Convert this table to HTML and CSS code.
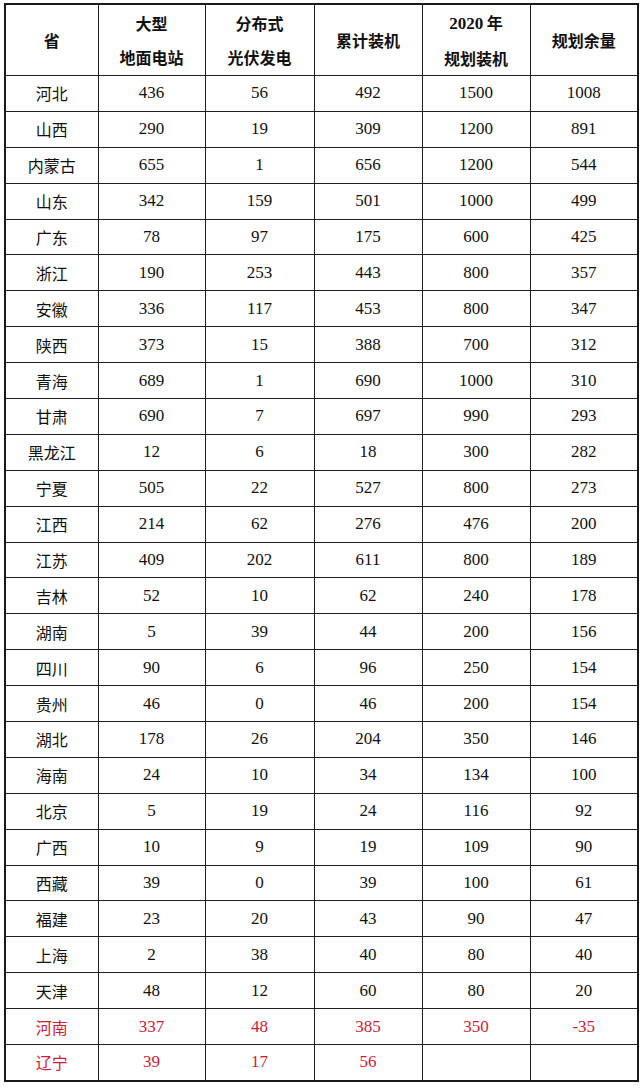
FILE: index.html
```html
<!DOCTYPE html>
<html lang="zh">
<head>
<meta charset="utf-8">
<link rel="stylesheet" href="styles.css">
</head>
<body>
<table class="grid">
<colgroup>
<col class="c1"><col class="c2"><col class="c3"><col class="c4"><col class="c5"><col class="c6">
</colgroup>
<thead>
<tr><th>省</th><th>大型<br>地面电站</th><th>分布式<br>光伏发电</th><th>累计装机</th><th><span class="num">2020</span> 年<br>规划装机</th><th>规划余量</th></tr>
</thead>
<tbody>
<tr><td class="prov">河北</td><td>436</td><td>56</td><td>492</td><td>1500</td><td>1008</td></tr>
<tr><td class="prov">山西</td><td>290</td><td>19</td><td>309</td><td>1200</td><td>891</td></tr>
<tr><td class="prov">内蒙古</td><td>655</td><td>1</td><td>656</td><td>1200</td><td>544</td></tr>
<tr><td class="prov">山东</td><td>342</td><td>159</td><td>501</td><td>1000</td><td>499</td></tr>
<tr><td class="prov">广东</td><td>78</td><td>97</td><td>175</td><td>600</td><td>425</td></tr>
<tr><td class="prov">浙江</td><td>190</td><td>253</td><td>443</td><td>800</td><td>357</td></tr>
<tr><td class="prov">安徽</td><td>336</td><td>117</td><td>453</td><td>800</td><td>347</td></tr>
<tr><td class="prov">陕西</td><td>373</td><td>15</td><td>388</td><td>700</td><td>312</td></tr>
<tr><td class="prov">青海</td><td>689</td><td>1</td><td>690</td><td>1000</td><td>310</td></tr>
<tr><td class="prov">甘肃</td><td>690</td><td>7</td><td>697</td><td>990</td><td>293</td></tr>
<tr><td class="prov">黑龙江</td><td>12</td><td>6</td><td>18</td><td>300</td><td>282</td></tr>
<tr><td class="prov">宁夏</td><td>505</td><td>22</td><td>527</td><td>800</td><td>273</td></tr>
<tr><td class="prov">江西</td><td>214</td><td>62</td><td>276</td><td>476</td><td>200</td></tr>
<tr><td class="prov">江苏</td><td>409</td><td>202</td><td>611</td><td>800</td><td>189</td></tr>
<tr><td class="prov">吉林</td><td>52</td><td>10</td><td>62</td><td>240</td><td>178</td></tr>
<tr><td class="prov">湖南</td><td>5</td><td>39</td><td>44</td><td>200</td><td>156</td></tr>
<tr><td class="prov">四川</td><td>90</td><td>6</td><td>96</td><td>250</td><td>154</td></tr>
<tr><td class="prov">贵州</td><td>46</td><td>0</td><td>46</td><td>200</td><td>154</td></tr>
<tr><td class="prov">湖北</td><td>178</td><td>26</td><td>204</td><td>350</td><td>146</td></tr>
<tr><td class="prov">海南</td><td>24</td><td>10</td><td>34</td><td>134</td><td>100</td></tr>
<tr><td class="prov">北京</td><td>5</td><td>19</td><td>24</td><td>116</td><td>92</td></tr>
<tr><td class="prov">广西</td><td>10</td><td>9</td><td>19</td><td>109</td><td>90</td></tr>
<tr><td class="prov">西藏</td><td>39</td><td>0</td><td>39</td><td>100</td><td>61</td></tr>
<tr><td class="prov">福建</td><td>23</td><td>20</td><td>43</td><td>90</td><td>47</td></tr>
<tr><td class="prov">上海</td><td>2</td><td>38</td><td>40</td><td>80</td><td>40</td></tr>
<tr><td class="prov">天津</td><td>48</td><td>12</td><td>60</td><td>80</td><td>20</td></tr>
<tr class="red"><td class="prov">河南</td><td>337</td><td>48</td><td>385</td><td>350</td><td>-35</td></tr>
<tr class="red"><td class="prov">辽宁</td><td>39</td><td>17</td><td>56</td><td></td><td></td></tr>
</tbody>
</table>
</body>
</html>
```

FILE: styles.css
```css
html, body {
  margin: 0;
  padding: 0;
  background: #ffffff;
}

body {
  padding: 3px 0 0 4px;
}

.grid {
  border-collapse: collapse;
  table-layout: fixed;
  width: 634px;
  border: 2px solid #1a1a1a;
  color: #111111;
}

.c1 { width: 93px; }
.c2 { width: 107px; }
.c3 { width: 109px; }
.c4 { width: 108px; }
.c5 { width: 108px; }
.c6 { width: 108px; }

.grid th,
.grid td {
  border: 1px solid #1f1f1f;
  text-align: center;
  vertical-align: middle;
  padding: 0;
}

.grid th {
  height: 68px;
  font-family: "Noto Sans CJK SC", "Noto Sans", sans-serif;
  font-weight: 700;
  font-size: 16px;
  line-height: 34px;
}

.grid th .num {
  font-family: "Liberation Serif", "Noto Sans CJK SC", serif;
  font-weight: 700;
  font-size: 17px;
}

.grid td {
  height: 34.9px;
  font-family: "Liberation Serif", "Noto Sans CJK SC", serif;
  font-size: 17px;
  line-height: 20px;
}

.grid td.prov {
  font-family: "Noto Sans CJK SC", "Noto Sans", sans-serif;
  font-size: 16px;
  font-weight: 400;
}

.grid tr.red td {
  color: #cf1a36;
}
```
